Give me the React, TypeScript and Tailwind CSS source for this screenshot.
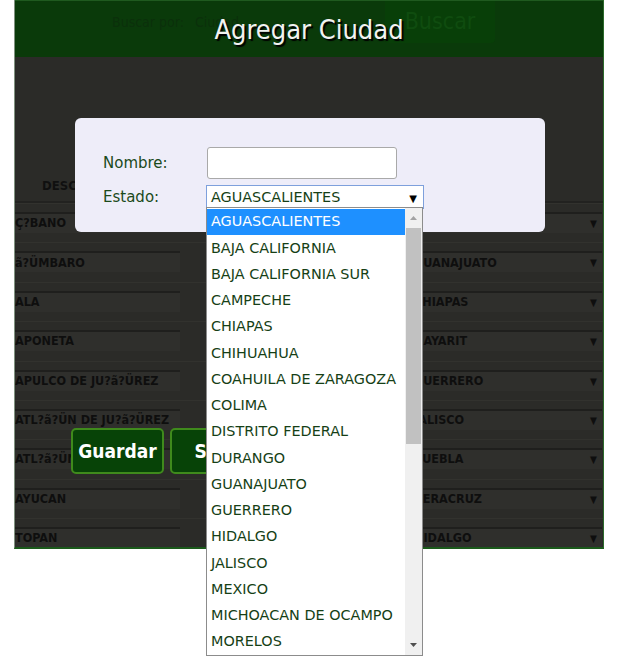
import React from "react";

const states = [
  "AGUASCALIENTES",
  "BAJA CALIFORNIA",
  "BAJA CALIFORNIA SUR",
  "CAMPECHE",
  "CHIAPAS",
  "CHIHUAHUA",
  "COAHUILA DE ZARAGOZA",
  "COLIMA",
  "DISTRITO FEDERAL",
  "DURANGO",
  "GUANAJUATO",
  "GUERRERO",
  "HIDALGO",
  "JALISCO",
  "MEXICO",
  "MICHOACAN DE OCAMPO",
  "MORELOS",
];

const rows: [string, string][] = [
  ["Ç?BANO", "CHIAPAS"],
  ["ã?ÜMBARO", "GUANAJUATO"],
  ["ALA", "CHIAPAS"],
  ["APONETA", "NAYARIT"],
  ["APULCO DE JU?ã?ÜREZ", "GUERRERO"],
  ["ATL?ã?ÜN DE JU?ã?ÜREZ", "JALISCO"],
  ["ATL?ã?ÜN", "PUEBLA"],
  ["AYUCAN", "VERACRUZ"],
  ["TOPAN", "HIDALGO"],
];

export default function App() {
  return (
    <div className="relative w-[629px] h-[656px] bg-white overflow-hidden font-['DejaVu_Sans',sans-serif]">
      {/* underlying page, darkened */}
      <div className="ml-[14px] w-[590px] h-[549px] border-l border-l-[#7f917f] border-r border-r-[#2b6a2b] border-b-2 border-b-[#1b5a1b] overflow-hidden bg-[#2b2b28] flex flex-col font-['DejaVu_Sans_Condensed','DejaVu_Sans',sans-serif]">
        <div className="h-[57px] shrink-0 bg-[#0a3a0a] border-t border-t-[#1f5a1f]">
          <div className="flex h-[42px] items-center">
            <span className="ml-[97px] w-[83px] text-[14px] text-[#0b300b]">Buscar por:</span>
            <span className="w-[190px] text-[14px] text-[#0b300b]">Ciudad</span>
            <div className="w-[110px] h-[42px] -mt-[1px] rounded-b-[4px] bg-[#083f08] flex items-center justify-center text-[23px] text-[#0f4c0f]">
              Buscar
            </div>
          </div>
        </div>
        <div className="h-[113px] shrink-0" />
        <div className="h-[33px] shrink-0 flex items-center pl-[27px] border-b-2 border-b-[#222220]">
          <span className="text-[13px] font-bold text-[#101010]">DESCRIPCION</span>
        </div>
        {rows.map(([a, b], i) => (
          <div key={i} className="h-[39.4px] shrink-0 border-t border-t-[#32322e] flex items-start pt-[8px]">
            <div className="w-[165px] h-[21px] border-t-2 border-t-[#1f1f1d] bg-[#2f2f2c] flex items-center text-[12.5px] font-bold text-[#0e0e0e] whitespace-nowrap overflow-hidden">
              {a}
            </div>
            <div className="ml-[240px] w-[182px] h-[21px] border-t-2 border-t-[#1f1f1d] bg-[#2f2f2c] flex items-center justify-between text-[12.5px] font-bold text-[#0e0e0e] pr-[5px]">
              <span className="-ml-[6px]">{b}</span>
              <span className="text-[10px] text-[#0e0e0e]">▼</span>
            </div>
          </div>
        ))}
      </div>

      {/* modal title */}
      <div className="absolute left-[14px] top-[12px] w-[590px] text-center text-[27px] leading-[36px] text-[#f2f2f2] [text-shadow:2px_2px_1px_#000] font-['DejaVu_Sans_Condensed','DejaVu_Sans',sans-serif]">
        Agregar Ciudad
      </div>

      {/* modal panel */}
      <div className="absolute left-[75px] top-[118px] w-[470px] h-[114px] bg-[#eeedf9] rounded-[6px] pt-[29px] pl-[28px] flex flex-col gap-[6px]">
        <div className="flex items-center">
          <span className="w-[104px] text-[15px] text-[#1b4a1b]">Nombre:</span>
          <div className="w-[190px] h-[32px] bg-white border border-[#a9a9a9] rounded-[3px]" />
        </div>
        <div className="flex items-center">
          <span className="w-[103px] text-[15px] text-[#1b4a1b]">Estado:</span>
          <div className="w-[218px] h-[24px] bg-white border border-[#7ea0dc] flex items-center justify-between pl-[4px] pr-[6px] pt-[2px]">
            <span className="text-[14.4px] text-[#163f16]">AGUASCALIENTES</span>
            <span className="text-[10px] text-black">▼</span>
          </div>
        </div>
      </div>

      {/* buttons */}
      <div className="absolute left-[71px] top-[428px] flex gap-[6px] font-['DejaVu_Sans_Condensed','DejaVu_Sans',sans-serif]">
        <div className="w-[93px] h-[46px] rounded-[5px] border-2 border-[#3f8a1c] bg-[#074307] flex items-center justify-center text-white font-bold text-[19px]">
          Guardar
        </div>
        <div className="w-[93px] h-[46px] rounded-[5px] border-2 border-[#3f8a1c] bg-[#074307] flex items-center justify-center text-white font-bold text-[19px]">
          Salir
        </div>
      </div>

      {/* open dropdown list */}
      <div className="absolute left-[206px] top-[207px] w-[217px] h-[449px] bg-white border border-[#8c8c8c] flex overflow-hidden">
        <div className="flex-1 flex flex-col pt-[1px]">
          {states.map((s, i) => (
            <div
              key={s}
              className={
                i === 0
                  ? "h-[26.25px] shrink-0 flex items-center pl-[4px] bg-[#1e90ff] text-white text-[14.4px] whitespace-nowrap"
                  : "h-[26.25px] shrink-0 flex items-center pl-[4px] text-[#163f16] text-[14.4px] whitespace-nowrap"
              }
            >
              {s}
            </div>
          ))}
        </div>
        <div className="w-[17px] h-full bg-[#f0f0f0] flex flex-col items-center">
          <div className="h-[20px] w-full flex items-center justify-center">
            <svg width="7" height="4" viewBox="0 0 7 4"><path d="M0 4 L3.5 0 L7 4 Z" fill="#a3a3a3" /></svg>
          </div>
          <div className="w-[15px] h-[216px] bg-[#c1c1c1]" />
          <div className="flex-1" />
          <div className="h-[20px] w-full flex items-center justify-center">
            <svg width="7" height="4" viewBox="0 0 7 4"><path d="M0 0 L3.5 4 L7 0 Z" fill="#505050" /></svg>
          </div>
        </div>
      </div>
    </div>
  );
}
